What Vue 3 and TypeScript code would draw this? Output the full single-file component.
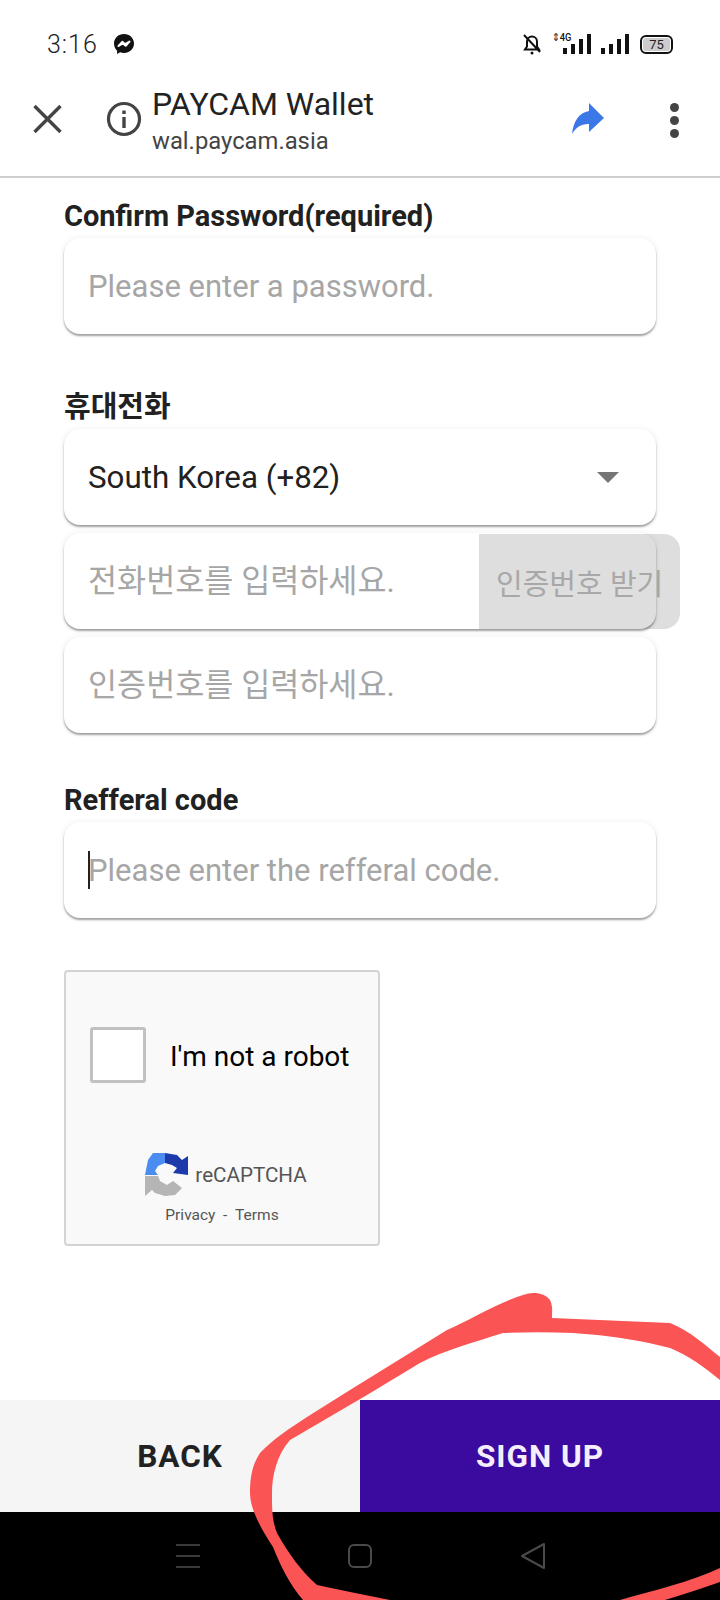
<script setup lang="ts">
const bars = [6, 10, 15, 20];
</script>

<template>
  <div class="page">
    <div class="status-bar">
      <span class="time">3:16</span>
      <svg class="messenger" viewBox="0 0 24 24" width="24" height="24">
        <path fill="#111" d="M12 2C6.300 2 2 6.100 2 11.600c0 2.900 1.200 5.400 3.100 7.100v3.300l3-1.700c1.200.4 2.500.6 3.900.6 5.700 0 10-4.100 10-9.400S17.700 2 12 2z" />
        <path fill="none" stroke="#fff" stroke-width="2" stroke-linejoin="round" d="M6.500 14l3.800-4.200 2.800 2.400 4.400-2.600-3.800 4.200-2.800-2.400z" />
      </svg>
      <span class="spacer"></span>
      <svg viewBox="0 0 20 24" width="20" height="24" class="bell">
        <path fill="none" stroke="#111" stroke-width="2" d="M3 17.500h14l-2-3V9.500a5 5 0 0 0-10 0v5z M2 3l16 17" />
        <circle cx="10" cy="21" r="1.500" fill="#111" />
      </svg>
      <span class="net">
        <span class="net-label">⇕4G</span>
        <span class="bars net-bars"><i v-for="b in bars" :key="b" :style="{ height: b + 'px' }"></i></span>
      </span>
      <span class="bars"><i v-for="b in bars" :key="b" :style="{ height: b + 'px' }"></i></span>
      <span class="battery"><span class="level">75</span></span>
    </div>

    <div class="toolbar">
      <svg class="close" viewBox="0 0 32 32" width="32" height="32">
        <path fill="none" stroke="#444" stroke-width="3.400" d="M3.500 3l26 26M29.500 3l-26 26" />
      </svg>
      <svg class="info" viewBox="0 0 36 36" width="36" height="36">
        <circle cx="18" cy="18" r="15.500" fill="none" stroke="#444" stroke-width="3.200" />
        <path fill="#444" d="M16.300 16h3.400v11h-3.400zM16.300 9.500h3.400v3.400h-3.400z" />
      </svg>
      <div class="title-block">
        <div class="title">PAYCAM Wallet</div>
        <div class="url">wal.paycam.asia</div>
      </div>
      <svg class="share" viewBox="0 0 33 32" width="33" height="32">
        <path fill="#3b78e7" d="M17 0l15 15-15 14v-8C10 20.500 4 24 0 31 1.500 18 7 9.500 17 8z" />
      </svg>
      <span class="kebab"><i></i><i></i><i></i></span>
    </div>

    <div class="form">
      <label class="field-label first">Confirm Password(required)</label>
      <div class="field">
        <input class="text-input" placeholder="Please enter a password." />
      </div>

      <label class="field-label second">휴대전화</label>
      <div class="field select">
        <span class="select-value">South Korea (+82)</span>
        <span class="arrow"></span>
      </div>
      <div class="field phone">
        <input class="text-input ko" placeholder="전화번호를 입력하세요." />
        <button class="code-btn">인증번호 받기</button>
      </div>
      <div class="field">
        <input class="text-input ko" placeholder="인증번호를 입력하세요." />
      </div>

      <label class="field-label third">Refferal code</label>
      <div class="field">
        <span class="caret"></span>
        <input class="text-input" placeholder="Please enter the refferal code." />
      </div>

      <div class="captcha">
        <div class="captcha-row">
          <span class="checkbox"></span>
          <span class="robot">I'm not a robot</span>
        </div>
        <div class="brand">
          <svg viewBox="0 0 44 44" width="44" height="44">
            <path fill="#b5b5b5" d="M0 23h13l2 5 7 4 6-4 9 7-7 7-10 1-10-3-3-3-7 6z" />
            <path fill="#4a8cf0" d="M0 22 3 7l5-7h12v10l-7 3-3 5 3 4z" />
            <path fill="#1c3aa9" d="M20 0l12 2 5 5 6-4v19l-15-2 4-5-5-3-7-2z" />
          </svg>
          <span class="brand-name">reCAPTCHA</span>
        </div>
        <div class="captcha-links">Privacy&nbsp; - &nbsp;Terms</div>
      </div>
    </div>

    <div class="actions">
      <button class="action back">BACK</button>
      <button class="action signup">SIGN UP</button>
    </div>

    <div class="nav-bar">
      <span class="nav-menu"><i></i><i></i><i></i></span>
      <span class="nav-home"></span>
      <svg viewBox="0 0 26 28" width="26" height="28">
        <path fill="none" stroke="#4a4a4a" stroke-width="2" stroke-linejoin="round" d="M24 2v24L2 14z" />
      </svg>
    </div>

    <!-- marker scribble on top of the screenshot -->
    <svg class="scribble" viewBox="0 0 720 1600" width="720" height="1600">
      <path fill="#fb5454" d="M523 1295C533 1291 545 1293 550 1300C553 1306 552 1312 552 1318L670 1323C690 1331 705 1345 720 1357V1380C705 1368 690 1356 670 1348C640 1340 605 1335 573 1333C550 1332 525 1332 503 1333C475 1342 445 1350 420 1363L367 1395L290 1440C277 1455 272 1475 272 1493C272 1510 272 1520 277 1533C288 1553 302 1572 317 1585C340 1590 365 1595 390 1600H303C290 1585 280 1565 273 1547C262 1530 250 1510 250 1493C250 1478 252 1465 260 1453C272 1440 290 1428 307 1417L350 1390L447 1330C470 1320 497 1303 523 1295Z" />
      <path fill="#fb5454" d="M720 1568C690 1582 655 1590 620 1600H665C685 1594 703 1588 720 1582Z" />
    </svg>
  </div>
</template>

<style scoped>
.page {
  position: relative;
  width: 720px;
  height: 1600px;
  overflow: hidden;
  background: #fff;
  display: flex;
  flex-direction: column;
  font-family: Roboto, "Noto Sans CJK KR", sans-serif;
  color: #212121;
}

.status-bar {
  height: 72px;
  padding: 16px 47px 0 47px;
  box-sizing: border-box;
  display: flex;
  align-items: center;
  flex-shrink: 0;
}

.time {
  font-size: 25px;
  font-weight: 300;
  letter-spacing: 1px;
  color: #222;
}

.messenger {
  margin-left: 14px;
}

.spacer {
  flex: 1;
}

.bell {
  margin-right: 17px;
}

.net {
  position: relative;
  display: flex;
  margin-right: 10px;
}

.net-label {
  position: absolute;
  left: -7px;
  top: -2px;
  font-size: 11px;
  line-height: 11px;
  font-weight: 500;
  white-space: nowrap;
  color: #111;
  transform: scaleX(0.85);
  transform-origin: left;
}

.net-bars {
  margin-left: 4px;
}

.bars {
  display: flex;
  align-items: flex-end;
  gap: 4px;
  height: 20px;
}

.bars i {
  display: block;
  width: 4px;
  background: #111;
}

.battery {
  width: 33px;
  height: 19px;
  margin-left: 11px;
  border: 2px solid #111;
  border-radius: 6px;
  box-sizing: border-box;
  padding: 1px;
  display: flex;
}

.level {
  flex: 1;
  background: #ccc;
  border-radius: 3px;
  font-size: 13px;
  line-height: 13px;
  text-align: center;
  color: #222;
}

.toolbar {
  height: 106px;
  flex-shrink: 0;
  box-sizing: border-box;
  border-bottom: 2px solid #cfcfcf;
  display: flex;
  align-items: center;
  padding: 0 41px 10px 31px;
}

.close {
  flex-shrink: 0;
}

.info {
  margin-left: 43px;
  flex-shrink: 0;
}

.title-block {
  margin: 2px 0 0 10px;
  flex: 1;
}

.title {
  font-size: 32px;
  line-height: 40px;
  color: #222;
}

.url {
  margin-top: 2px;
  font-size: 23.800px;
  line-height: 30px;
  color: #444;
}

.kebab {
  display: flex;
  flex-direction: column;
  gap: 4px;
  margin: 2px 0 0 65px;
}

.kebab i {
  display: block;
  width: 9px;
  height: 9px;
  border-radius: 50%;
  background: #444;
}

.form {
  flex: 1;
  padding: 0 64px;
  display: flex;
  flex-direction: column;
}

.field-label {
  font-size: 29px;
  font-weight: 700;
  line-height: 36px;
  height: 36px;
  color: #212121;
}

.field-label.first {
  margin-top: 20px;
  margin-bottom: 4px;
}

.field-label.second {
  margin-top: 55px;
  margin-bottom: 4px;
}

.field-label.third {
  margin-top: 49px;
  margin-bottom: 4px;
}

.field {
  position: relative;
  height: 96px;
  box-sizing: border-box;
  padding: 0 24px;
  display: flex;
  align-items: center;
  border-radius: 16px;
  background: #fff;
  box-shadow: 0 2px 2px rgba(0, 0, 0, 0.35), 0 0 6px rgba(0, 0, 0, 0.07);
}

.field + .field {
  margin-top: 8px;
}

.text-input {
  flex: 1;
  min-width: 0;
  border: none;
  outline: none;
  padding: 0;
  background: transparent;
  font-family: inherit;
  font-size: 31px;
  color: #212121;
}

.text-input.ko {
  font-size: 31.600px;
}

.text-input::placeholder {
  color: #a6a6a6;
  opacity: 1;
}

.caret {
  width: 2px;
  height: 38px;
  background: #222;
  margin-right: -2px;
  flex-shrink: 0;
}

.select-value {
  flex: 1;
  font-size: 31.300px;
  color: #212121;
}

.arrow {
  width: 0;
  height: 0;
  margin-right: 13px;
  border-left: 11px solid transparent;
  border-right: 11px solid transparent;
  border-top: 11px solid #757575;
}

/* the button sticks out past the input, as in the app */
.code-btn {
  position: absolute;
  left: 415px;
  top: 1px;
  width: 201px;
  height: 95px;
  padding: 0 0 0 17px;
  border: none;
  border-radius: 0 16px 16px 0;
  background: #dedede;
  color: #a8a8a8;
  font-family: inherit;
  font-size: 29px;
  text-align: left;
  white-space: nowrap;
}

.phone {
  box-shadow: none;
}

.phone::after {
  content: "";
  position: absolute;
  inset: 0;
  border-radius: 16px;
  box-shadow: 0 2px 2px rgba(0, 0, 0, 0.35), 0 0 6px rgba(0, 0, 0, 0.07);
  pointer-events: none;
}

.captcha {
  width: 316px;
  height: 276px;
  margin-top: 52px;
  box-sizing: border-box;
  border: 2px solid #d3d3d3;
  border-radius: 4px;
  background: #f9f9f9;
  display: flex;
  flex-direction: column;
  align-items: center;
}

.captcha-row {
  align-self: stretch;
  display: flex;
  align-items: center;
  padding: 55px 0 0 24px;
}

.checkbox {
  width: 56px;
  height: 56px;
  box-sizing: border-box;
  border: 3px solid #c1c1c1;
  border-radius: 3px;
  background: #fff;
}

.robot {
  margin: 2px 0 0 24px;
  font-size: 28px;
  color: #000;
  white-space: nowrap;
}

.brand {
  display: flex;
  align-items: center;
  margin: 70px 0 0 8px;
  gap: 6px;
}

.brand-name {
  font-size: 20.600px;
  color: #555;
}

.captcha-links {
  margin-top: 9px;
  font-size: 15.500px;
  color: #555;
}

.actions {
  height: 112px;
  flex-shrink: 0;
  display: flex;
}

.action {
  flex: 1;
  border: none;
  font-family: inherit;
  font-size: 31.500px;
  font-weight: 700;
  letter-spacing: 1px;
}

.back {
  background: #f5f5f5;
  color: #212121;
}

.signup {
  background: #3b0a9e;
  color: #f5eeff;
}

.nav-bar {
  height: 88px;
  box-sizing: border-box;
  flex-shrink: 0;
  background: #000;
  display: flex;
  align-items: center;
  justify-content: space-between;
  padding: 0 174px 0 176px;
}

.nav-menu {
  display: flex;
  flex-direction: column;
  gap: 9px;
}

.nav-menu i {
  display: block;
  width: 24px;
  height: 2px;
  background: #3a3a3a;
}

.nav-home {
  width: 24px;
  height: 24px;
  box-sizing: border-box;
  border: 2px solid #4a4a4a;
  border-radius: 6px;
}

.scribble {
  position: absolute;
  left: 0;
  top: 0;
  pointer-events: none;
}
</style>
